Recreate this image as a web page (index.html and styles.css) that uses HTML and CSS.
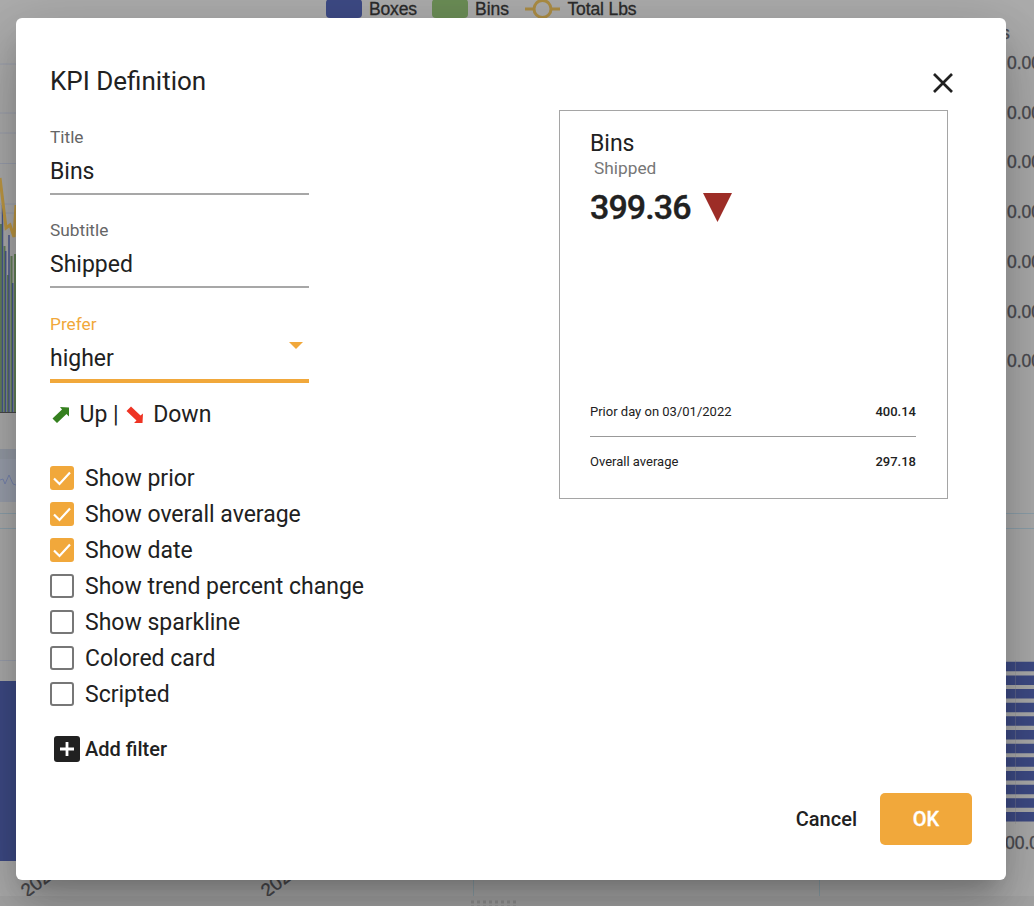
FILE: index.html
```html
<!DOCTYPE html>
<html lang="en">
<head>
<meta charset="utf-8">
<title>KPI Definition</title>
<link rel="stylesheet" href="styles.css">
</head>
<body>
<svg class="backdrop" viewBox="0 0 1034 906" aria-hidden="true">
  <rect width="1034" height="906" fill="#adadad"/>
  <g class="legend">
    <rect x="326" y="-1" width="36" height="19" rx="4" fill="#3e4b86"/>
    <text x="369" y="15" textLength="48">Boxes</text>
    <rect x="432" y="-1" width="36" height="19" rx="4" fill="#6c8e57"/>
    <text x="475" y="15" textLength="34">Bins</text>
    <path d="M525 9H560" stroke="#ad8e45" stroke-width="3"/>
    <circle cx="542.500" cy="9" r="8.500" fill="#adadad" stroke="#ad8e45" stroke-width="3"/>
    <text x="567.500" y="15" textLength="69">Total Lbs</text>
  </g>
  <path d="M0 64H16M0 113H16M0 133H16M0 163.500H16M0 204H16M0 213H16" stroke="#9ba0ae" fill="none"/>
  <path d="M0 224h2v188H0zM3.500 246h2v166h-2zM7 275h2v137H7zM10.500 256h2v156h-2zM14 254h2v158h-2z" fill="#66835a"/>
  <path d="M2.500 205V412M5.700 251V412M9 235V412M12.700 283V412" stroke="#48588e" stroke-width="1.500"/>
  <path d="M0 178L6 228L10 225L14 237L16 205" fill="none" stroke="#c09943" stroke-width="3"/>
  <path d="M0 412.500H16" stroke="#48484a"/>
  <rect y="449" width="16" height="53" fill="#9ba1ae"/>
  <rect y="449" width="16" height="10" fill="#969ca7"/>
  <path d="M0 480L3 479L5 484L9 475L13 484L16 485" fill="none" stroke="#7986b0"/>
  <path d="M0 513.500H16M0 528.500H16M1006 513.500H1034M1006 528.500H1034" stroke="#8ea2ad"/>
  <path d="M0 660.500H16" stroke="#9ca1ae"/>
  <rect y="681" width="16" height="180" fill="#3e4b86"/>
  <g class="axis">
    <text x="1001" y="39">s</text>
    <text x="1007" y="69">0.00</text><text x="1007" y="119">0.00</text>
    <text x="1007" y="168">0.00</text><text x="1007" y="218">0.00</text>
    <text x="1007" y="268">0.00</text><text x="1007" y="318">0.00</text>
    <text x="1007" y="367">0.00</text><text x="1005" y="849">00.0</text>
  </g>
  <path d="M1006 666.500H1034M1006 680.200H1034M1006 693.800H1034M1006 707.500H1034M1006 721.100H1034M1006 734.800H1034M1006 748.500H1034M1006 762.100H1034M1006 775.800H1034M1006 789.400H1034M1006 803.100H1034M1006 816.700H1034" stroke="#3e4b86" stroke-width="9.500"/>
  <path d="M1015.500 660V824" stroke="#8f9195" stroke-opacity=".35"/>
  <text class="tick" transform="translate(27 898) rotate(-37)">2022</text>
  <text class="tick" transform="translate(267 898) rotate(-37)">2022</text>
  <path d="M473.500 880V896M819.500 880V896" stroke="#91a5ad"/>
  <rect y="896" width="1034" height="10" fill="#a6a6a6"/>
  <path d="M471 902H516M471 907H516" stroke="#909090" stroke-width="3" stroke-dasharray="3 3"/>
</svg>

<main class="dialog">
  <header class="dialog-header">
    <h1 class="dialog-title">KPI Definition</h1>
    <svg class="close" viewBox="0 0 22 22"><path d="M2 2L20 20M20 2L2 20"/></svg>
  </header>
  <div class="content">
    <section class="form">
      <div class="field"><span class="label">Title</span><span class="value">Bins</span></div>
      <div class="field"><span class="label">Subtitle</span><span class="value">Shipped</span></div>
      <div class="field field-active">
        <span class="label">Prefer</span>
        <span class="value">higher</span>
        <svg class="arrow" viewBox="0 0 14 7"><path d="M0 0H14L7 7Z"/></svg>
      </div>
      <div class="directions">
        <svg class="trend" viewBox="0 0 18 18"><path fill="#35801f" d="M8 1L17 1.500L17 10.500L14.500 8L5 17L.5 12.500L10 3.500Z"/></svg>
        <span class="up">Up |</span>
        <svg class="trend" viewBox="0 0 18 18"><path fill="#ee3424" d="M.5 5L5 .5L14.500 9.500L17 7.500L16.500 17L8 17L10.500 14.500Z"/></svg>
        <span class="down">Down</span>
      </div>
      <ul class="options">
        <li class="option"><span class="box checked"><svg viewBox="0 0 24 24"><path d="M4 12.500L9.500 18L20 6.500"/></svg></span><span>Show prior</span></li>
        <li class="option"><span class="box checked"><svg viewBox="0 0 24 24"><path d="M4 12.500L9.500 18L20 6.500"/></svg></span><span>Show overall average</span></li>
        <li class="option"><span class="box checked"><svg viewBox="0 0 24 24"><path d="M4 12.500L9.500 18L20 6.500"/></svg></span><span>Show date</span></li>
        <li class="option"><span class="box"></span><span>Show trend percent change</span></li>
        <li class="option"><span class="box"></span><span>Show sparkline</span></li>
        <li class="option"><span class="box"></span><span>Colored card</span></li>
        <li class="option"><span class="box"></span><span>Scripted</span></li>
      </ul>
      <div class="add">
        <svg class="plus" viewBox="0 0 26 26"><rect width="26" height="26" rx="3"/><path d="M6 13H20M13 6V20"/></svg>
        <span>Add filter</span>
      </div>
    </section>
    <section class="card">
      <div class="card-title">Bins</div>
      <div class="card-subtitle">Shipped</div>
      <div class="card-value"><span>399.36</span><svg class="drop" viewBox="0 0 29 29"><path d="M0 0H29L14.500 29Z"/></svg></div>
      <div class="stats">
        <div class="stat"><span>Prior day on 03/01/2022</span><b>400.14</b></div>
        <div class="stat"><span>Overall average</span><b>297.18</b></div>
      </div>
    </section>
  </div>
  <footer class="actions">
    <button class="cancel">Cancel</button>
    <button class="ok">OK</button>
  </footer>
</main>
</body>
</html>
```
FILE: styles.css
```css
* { box-sizing: border-box; }
body {
  margin: 0;
  height: 906px;
  overflow: hidden;
  padding: 18px 28px 26px 16px;
  font-family: Roboto, "Liberation Sans", sans-serif;
  color: #212121;
}
.backdrop {
  position: absolute;
  left: 0;
  top: 0;
  width: 1034px;
  height: 906px;
}
.legend text { font: 17.5px "Liberation Sans", sans-serif; fill: #2b2b2b; stroke: #2b2b2b; stroke-width: .3px; }
.axis text { font: 17.5px "Liberation Sans", sans-serif; fill: #4a4a50; stroke: #4a4a50; stroke-width: .3px; }
.tick { font: 19px "Liberation Sans", sans-serif; fill: #4a4a4e; stroke: #4a4a4e; stroke-width: .3px; }

.dialog {
  position: relative;
  display: flex;
  flex-direction: column;
  height: 862px;
  padding: 46px 34px 35px;
  border-radius: 6px;
  background: #fff;
  box-shadow: 0 16px 22px -10px rgba(0,0,0,.2), 0 35px 55px 4px rgba(0,0,0,.14), 0 13px 66px 12px rgba(0,0,0,.12);
}
.dialog-header {
  display: flex;
  justify-content: space-between;
  height: 46px;
  padding-right: 18px;
}
.dialog-title {
  margin: 0;
  font-size: 26px;
  line-height: 34px;
  font-weight: 400;
}
.close { width: 22px; height: 22px; margin-top: 8px; }
.close path { fill: none; stroke: #212121; stroke-width: 2.7; }

.content { display: flex; justify-content: space-between; flex: 1; }
.form { width: 330px; }
.field {
  position: relative;
  display: flex;
  flex-direction: column;
  width: 259px;
  height: 68px;
  margin: 0 0 26px;
  border-bottom: 2px solid #a7a7a7;
}
.field:first-child { margin-top: 17px; margin-bottom: 25px; }
.label { font-size: 17.3px; line-height: 20px; color: #666; }
.value { font-size: 23px; line-height: 28px; margin-top: 11px; }
.field-active { height: 69px; margin-bottom: 16px; border-bottom: 4px solid #f1a83b; }
.field-active .label { color: #f1a83b; }
.arrow { position: absolute; right: 6px; top: 28px; width: 14px; height: 7px; fill: #f1a83b; }
.directions {
  display: flex;
  align-items: center;
  height: 30px;
  font-size: 23px;
  white-space: nowrap;
}
.trend { width: 18px; height: 18px; margin: 1px 0 0 1.5px; }
.up { margin: 0 6px 0 10px; }
.down { margin-left: 9px; }
.options { margin: 31px 0 0; padding: 0; list-style: none; }
.option {
  display: flex;
  align-items: center;
  gap: 11px;
  height: 36px;
  font-size: 23px;
  white-space: nowrap;
}
.box { width: 24px; height: 24px; border: 2px solid #777; border-radius: 3px; }
.checked { border: 0; background: #f1a83b; }
.checked svg { display: block; width: 24px; height: 24px; }
.checked path { fill: none; stroke: #fff; stroke-width: 2.2; }
.add {
  display: flex;
  align-items: center;
  gap: 5px;
  margin: 24px 0 0 4px;
  font-size: 20px;
  font-weight: 500;
}
.plus { width: 26px; height: 26px; fill: #212121; }
.plus path { stroke: #fff; stroke-width: 2.8; }

.card {
  display: flex;
  flex-direction: column;
  width: 389px;
  height: 389px;
  margin-right: 24px;
  padding: 19px 31px 20px 30px;
  border: 1.5px solid #a5a5a5;
}
.card-title { font-size: 23px; line-height: 28px; }
.card-subtitle { margin: -1px 0 0 4px; font-size: 17.3px; line-height: 22px; color: #777; }
.card-value {
  display: flex;
  align-items: center;
  gap: 12px;
  height: 44px;
  margin-top: 6px;
  font-size: 34px;
  font-weight: 500;
  letter-spacing: -.9px;
  -webkit-text-stroke: .4px #212121;
}
.drop { width: 29px; height: 29px; fill: #9d2d27; }
.stats { margin-top: auto; font-size: 13px; }
.stat {
  display: flex;
  align-items: center;
  justify-content: space-between;
  height: 50px;
}
.stat + .stat { height: 49px; margin-bottom: -7px; border-top: 1px solid #999; }
.stat b { font-weight: 500; }

.actions { display: flex; justify-content: flex-end; gap: 23px; height: 52px; }
.actions button {
  padding: 0;
  border: 0;
  background: none;
  color: #212121;
  font: 500 20px/52px Roboto, "Liberation Sans", sans-serif;
}
.actions .ok {
  width: 92px;
  border-radius: 5px;
  background: #f1a83b;
  color: #fff;
  -webkit-text-stroke: .3px #fff;
}
```
